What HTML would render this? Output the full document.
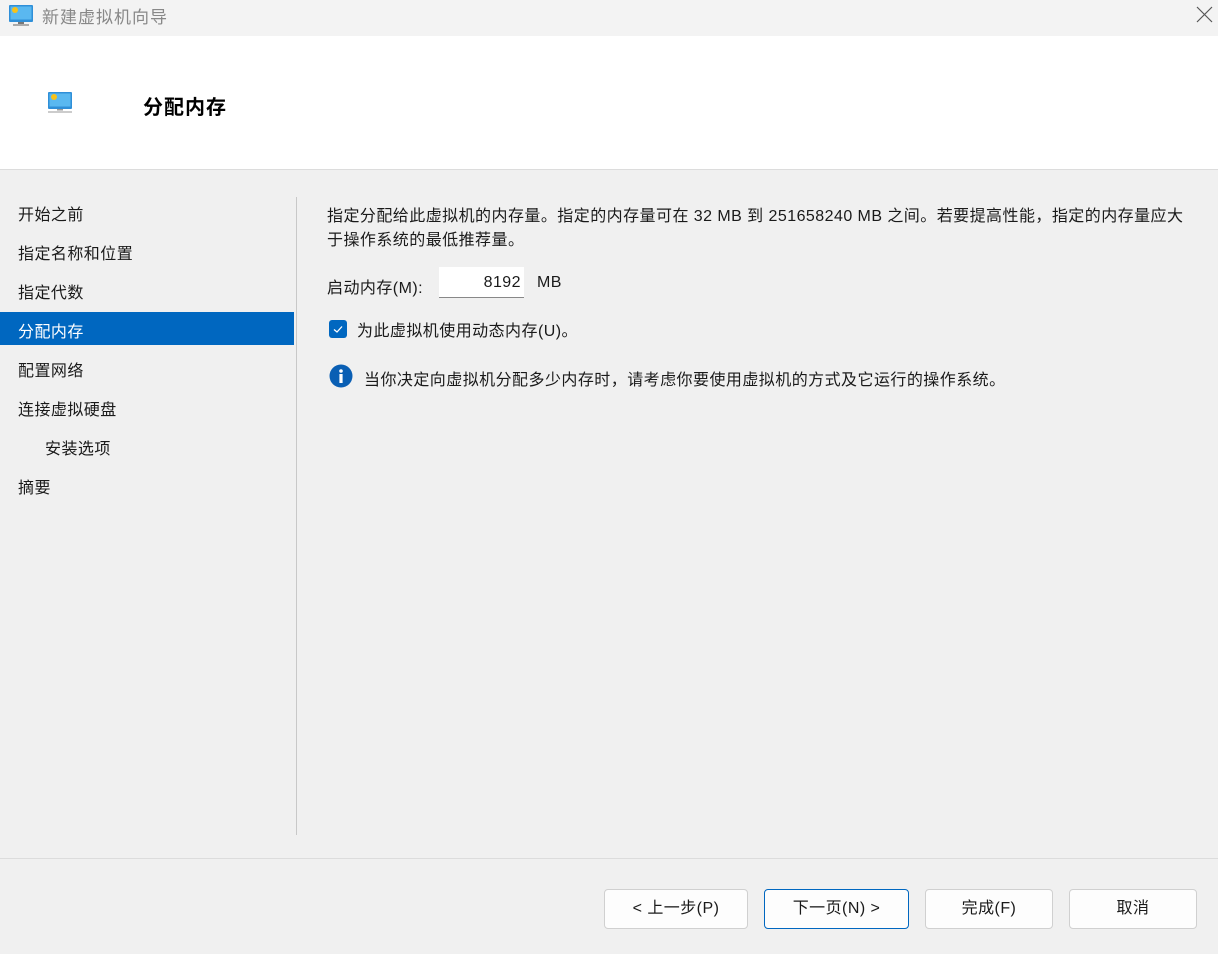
<!DOCTYPE html>
<html><head><meta charset="utf-8"><style>
*{margin:0;padding:0;box-sizing:border-box}
body{width:1218px;height:954px;overflow:hidden;background:#f0f0f0;font-family:"Liberation Sans","Noto Sans CJK SC",sans-serif;font-size:16px;letter-spacing:0.45px;color:#1a1a1a;position:relative}
.abs{position:absolute}
.title{left:0;top:0;width:1218px;height:36px;background:#f3f3f3}
.hdr{left:0;top:36px;width:1218px;height:134px;background:#fff;border-bottom:1px solid #dcdcdc}
.nav{left:18px;white-space:nowrap}
.btn{top:889px;height:40px;background:#fdfdfd;border:1px solid #d0d0d0;border-radius:4px;text-align:center;line-height:38px;font-size:16px}
</style></head><body>
<div class="abs title">
<svg class="abs" style="left:9px;top:5px" width="24" height="22" viewBox="0 0 24 22"><rect x="0" y="0" width="24" height="17" rx="1" fill="#2f8fd8"/><rect x="1.5" y="1.5" width="21" height="13" fill="#5ab8f0"/><circle cx="6" cy="5" r="3" fill="#f7c21a"/><rect x="9" y="17" width="6" height="2" fill="#777"/><rect x="4" y="19" width="16" height="2" fill="#aaa"/></svg>
<div class="abs" style="left:42px;top:3px;font-size:17px;letter-spacing:1px;color:#888">新建虚拟机向导</div>
<svg class="abs" style="left:1196px;top:6px" width="17" height="17"><path d="M1 1L16 16M16 1L1 16" stroke="#555" stroke-width="1.2"/></svg>
</div>
<div class="abs hdr">
<svg class="abs" style="left:48px;top:56px" width="24" height="22" viewBox="0 0 24 22"><rect x="0" y="0" width="24" height="17" rx="1" fill="#2f8fd8"/><rect x="1.5" y="1.5" width="21" height="13" fill="#5ab8f0"/><circle cx="6" cy="5" r="3" fill="#f7c21a"/><rect x="9" y="17" width="6" height="1.5" fill="#999"/><rect x="0" y="19" width="24" height="2" fill="#ccc"/></svg>
<div class="abs" style="left:143px;top:55px;font-size:20px;letter-spacing:1px;font-weight:bold;color:#000">分配内存</div>
</div>
<div class="abs nav" style="top:201px">开始之前</div>
<div class="abs nav" style="top:240px">指定名称和位置</div>
<div class="abs nav" style="top:279px">指定代数</div>
<div class="abs" style="left:0;top:312px;width:294px;height:33px;background:#0067c0"></div>
<div class="abs nav" style="top:318px;color:#fff">分配内存</div>
<div class="abs nav" style="top:357px">配置网络</div>
<div class="abs nav" style="top:396px">连接虚拟硬盘</div>
<div class="abs nav" style="top:435px;left:45px">安装选项</div>
<div class="abs nav" style="top:474px">摘要</div>
<div class="abs" style="left:296px;top:197px;width:1px;height:638px;background:#c8c8c8"></div>
<div class="abs" style="left:327px;top:205px;width:870px;line-height:24px">指定分配给此虚拟机的内存量。指定的内存量可在 32 MB 到 251658240 MB 之间。若要提高性能，指定的内存量应大于操作系统的最低推荐量。</div>
<div class="abs" style="left:327px;top:274px">启动内存(M):</div>
<div class="abs" style="left:439px;top:267px;width:85px;height:31px;background:#fff;border-bottom:1px solid #888;text-align:right;padding-right:3px;line-height:31px;font-size:16px">8192</div>
<div class="abs" style="left:537px;top:274px;font-size:16px">MB</div>
<div class="abs" style="left:329px;top:320px;width:18px;height:18px;background:#0067c0;border-radius:3px"><svg width="18" height="18"><path d="M5 9.5L8 12L13 6.5" stroke="#fff" stroke-width="1.3" fill="none"/></svg></div>
<div class="abs" style="left:357px;top:317px">为此虚拟机使用动态内存(U)。</div>
<svg class="abs" style="left:329px;top:364px" width="24" height="24"><circle cx="12" cy="12" r="11.5" fill="#0a5fb4"/><circle cx="12" cy="7" r="1.8" fill="#fff"/><rect x="10.4" y="10" width="3.2" height="9" fill="#fff"/></svg>
<div class="abs" style="left:364px;top:366px">当你决定向虚拟机分配多少内存时，请考虑你要使用虚拟机的方式及它运行的操作系统。</div>
<div class="abs" style="left:0;top:858px;width:1218px;height:1px;background:#dcdcdc"></div>
<div class="abs btn" style="left:604px;width:144px">&lt; 上一步(P)</div>
<div class="abs btn" style="left:764px;width:145px;border:1.5px solid #0067c0">下一页(N) &gt;</div>
<div class="abs btn" style="left:925px;width:128px">完成(F)</div>
<div class="abs btn" style="left:1069px;width:128px">取消</div>
</body></html>
